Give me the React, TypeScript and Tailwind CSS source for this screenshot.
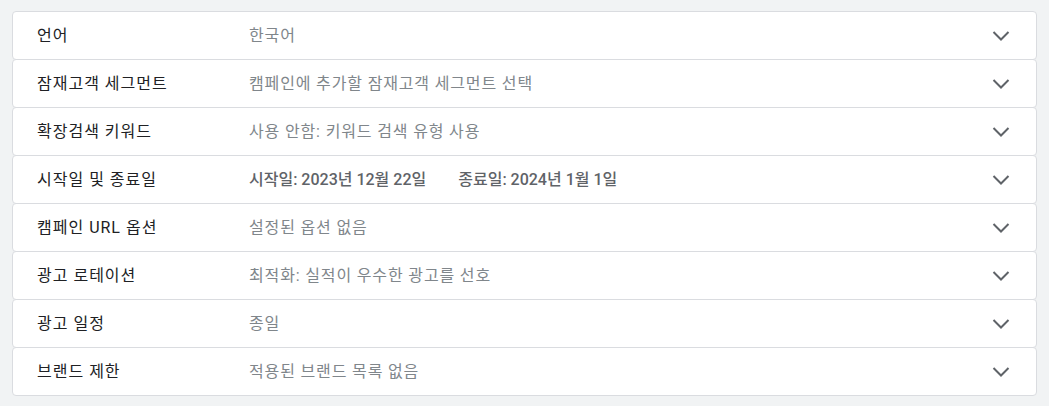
const rows: { label: string; value: React.ReactNode; dark?: boolean }[] = [
  { label: '언어', value: '한국어' },
  { label: '잠재고객 세그먼트', value: '캠페인에 추가할 잠재고객 세그먼트 선택' },
  { label: '확장검색 키워드', value: '사용 안함: 키워드 검색 유형 사용' },
  {
    label: '시작일 및 종료일',
    dark: true,
    value: (
      <>
        <span>시작일: 2023년 12월 22일</span>
        <span className="ml-8">종료일: 2024년 1월 1일</span>
      </>
    ),
  },
  { label: '캠페인 URL 옵션', value: '설정된 옵션 없음' },
  { label: '광고 로테이션', value: '최적화: 실적이 우수한 광고를 선호' },
  { label: '광고 일정', value: '종일' },
  { label: '브랜드 제한', value: '적용된 브랜드 목록 없음' },
];

function Chevron() {
  return (
    <svg width="20" height="20" viewBox="0 0 20 20" fill="none">
      <path d="M2.5 6 L10 13.5 L17.5 6" stroke="#5f6368" strokeWidth="2" />
    </svg>
  );
}

export default function App() {
  return (
    <div
      className="min-h-[406px] bg-[#f1f3f4] px-3 pt-[11px]"
      style={{ fontFamily: 'Roboto, "Noto Sans CJK KR", sans-serif' }}
    >
      {rows.map((row, i) => (
        <div
          key={row.label}
          className={`flex h-[49px] items-center rounded-[4px] border border-[#dadce0] bg-white pl-6 pr-[25px] ${
            i > 0 ? '-mt-px' : ''
          }`}
        >
          <div className="w-[212px] shrink-0 text-[16px] tracking-[1px] text-[#202124]">{row.label}</div>
          <div
            className={`flex-1 text-[16px] ${
              row.dark ? 'font-medium text-[#5f6368]' : 'tracking-[0.85px] text-[#80868b]'
            }`}
          >
            {row.value}
          </div>
          <Chevron />
        </div>
      ))}
    </div>
  );
}
